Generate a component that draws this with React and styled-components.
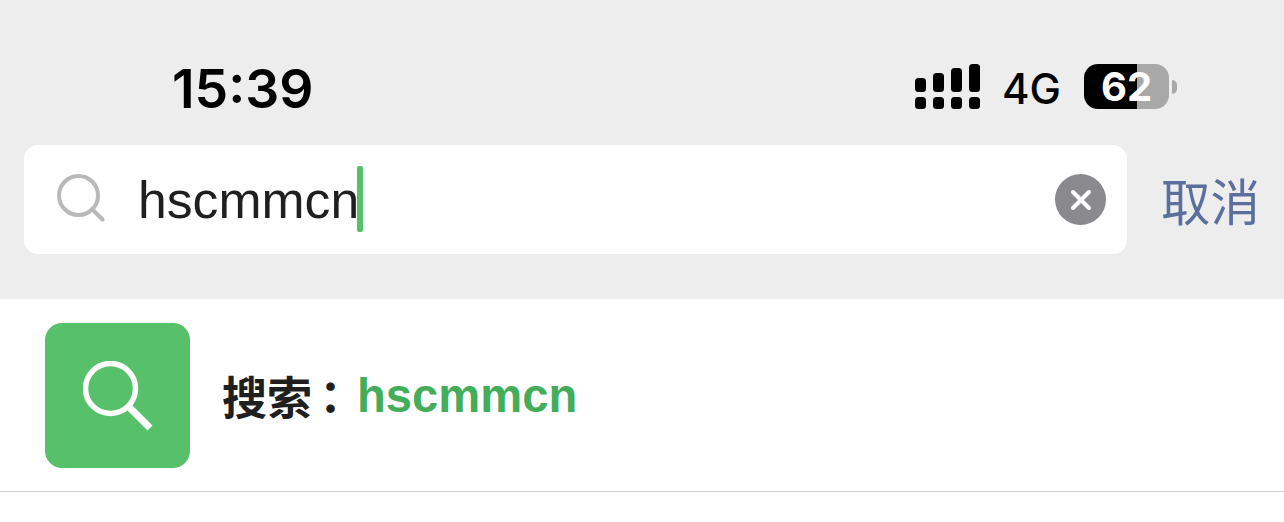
import React from 'react'
import styled, { createGlobalStyle } from 'styled-components'

const GlobalStyle = createGlobalStyle`
  html, body { margin: 0; padding: 0; background: #fff; }
  body { font-family: "Liberation Sans", "Noto Sans CJK SC", sans-serif; }
`

const Page = styled.div`
  width: 1284px;
  height: 522px;
  overflow: hidden;
  background: #fff;
`
const Header = styled.header`
  height: 299px;
  box-sizing: border-box;
  background: #ededed;
  padding: 64px 24px 0;
`
const StatusBar = styled.div`
  height: 45px;
  display: flex;
  align-items: center;
  justify-content: space-between;
  padding: 0 83px 0 148px;
`
const Time = styled.div`
  padding-top: 3px;
  font-family: Inter, "Liberation Sans", sans-serif;
  font-weight: 600;
  font-size: 53.5px;
  line-height: 45px;
  color: #000;
`
const StatusIcons = styled.div`
  display: flex;
  align-items: center;
`
const Network = styled.span`
  margin: 4px 23px 0 22px;
  font-family: Inter, "Liberation Sans", sans-serif;
  font-weight: 500;
  font-size: 42px;
  line-height: 45px;
  color: #000;
`
const Battery = styled.div`
  width: 85px;
  height: 45px;
  border-radius: 14px;
  background: linear-gradient(90deg, #000 0 53px, #a8a8a8 53px);
  color: #fff;
  font-family: Inter, "Liberation Sans", sans-serif;
  font-weight: 700;
  font-size: 40px;
  line-height: 45px;
  text-align: center;
`
const BatteryTip = styled.div`
  width: 5px;
  height: 14px;
  margin-left: 3px;
  border-radius: 0 7px 7px 0;
  background: #a8a8a8;
`
const SearchRow = styled.div`
  display: flex;
  align-items: center;
  margin-top: 36px;
`
const SearchBox = styled.div`
  flex: none;
  width: 1103px;
  height: 109px;
  box-sizing: border-box;
  display: flex;
  align-items: center;
  padding: 0 21px 0 33px;
  border-radius: 14px;
  background: #fff;
`
const FieldIcon = styled.svg`
  margin-top: -3px;
`
const Query = styled.div`
  flex: 1;
  display: flex;
  align-items: center;
  margin-left: 33px;
  font-size: 51.7px;
  line-height: 66px;
  color: #1f1f1f;
`
const Caret = styled.span`
  width: 6px;
  height: 66px;
  margin-top: -2px;
  margin-left: -2px;
  border-radius: 2px;
  background: #57c06a;
`
const ClearButton = styled.div`
  width: 51px;
  height: 51px;
  display: flex;
  align-items: center;
  justify-content: center;
  border-radius: 50%;
  background: #8a8a8e;
`
const Cancel = styled.div`
  margin-left: 34px;
  font-family: "Noto Sans CJK SC", sans-serif;
  font-size: 49.5px;
  line-height: 60px;
  color: #5b6f9d;
  white-space: nowrap;
`
const ResultRow = styled.div`
  height: 193px;
  box-sizing: border-box;
  display: flex;
  align-items: flex-start;
  padding: 24px 0 0 45px;
  border-bottom: 1px solid #cfcfcf;
`
const ResultIcon = styled.div`
  width: 145px;
  height: 145px;
  display: flex;
  align-items: center;
  justify-content: center;
  border-radius: 17px;
  background: #57c06a;
`
const ResultText = styled.div`
  height: 145px;
  display: flex;
  align-items: center;
  margin-left: 32px;
  font-weight: 700;
  line-height: 60px;
`
const ResultLabel = styled.span`
  font-family: "Noto Sans CJK SC", sans-serif;
  font-size: 45px;
  color: #1f1f1f;
`
// the colon sits in the middle of its square in the reference, as the TC glyph does
const ResultColon = styled.span`
  margin: 0 4px 0 -4px;
  font-family: "Noto Sans CJK TC", sans-serif;
  font-size: 45px;
  color: #1f1f1f;
`
const ResultQuery = styled.span`
  font-size: 47.2px;
  color: #43ad5a;
`

const Signal = () => (
  <svg width="65" height="45" viewBox="0 0 65 45" fill="#000">
    <rect x="0" y="14" width="11" height="14" rx="3.5" />
    <rect x="18" y="9" width="11" height="19" rx="3.5" />
    <rect x="36" y="4" width="11" height="24" rx="3.5" />
    <rect x="54" y="0" width="11" height="28" rx="3.5" />
    <rect x="0" y="33" width="11" height="12" rx="3.5" />
    <rect x="18" y="33" width="11" height="12" rx="3.5" />
    <rect x="36" y="33" width="11" height="12" rx="3.5" />
    <rect x="54" y="33" width="11" height="12" rx="3.5" />
  </svg>
)

export default function App() {
  return (
    <Page>
      <GlobalStyle />
      <Header>
        <StatusBar>
          <Time>15:39</Time>
          <StatusIcons>
            <Signal />
            <Network>4G</Network>
            <Battery>62</Battery>
            <BatteryTip />
          </StatusIcons>
        </StatusBar>
        <SearchRow>
          <SearchBox>
            <FieldIcon width="48" height="48" viewBox="0 0 48 48" fill="none" stroke="#b9b9b9" strokeWidth="4" strokeLinecap="round">
              <circle cx="21.5" cy="21.5" r="19.5" />
              <path d="M35 35 L45.5 45.5" />
            </FieldIcon>
            <Query>
              hscmmcn
              <Caret />
            </Query>
            <ClearButton>
              <svg width="24" height="24" viewBox="0 0 24 24" stroke="#fff" strokeWidth="4" strokeLinecap="round">
                <path d="M4 4 L20 20 M20 4 L4 20" />
              </svg>
            </ClearButton>
          </SearchBox>
          <Cancel>取消</Cancel>
        </SearchRow>
      </Header>
      <ResultRow>
        <ResultIcon>
          <svg width="70" height="70" viewBox="0 0 70 70" fill="none" stroke="#fff">
            <circle cx="27.5" cy="27.5" r="25" strokeWidth="5.5" />
            <path d="M45 45 L67 67" strokeWidth="7" />
          </svg>
        </ResultIcon>
        <ResultText>
          <ResultLabel>搜索</ResultLabel>
          <ResultColon>：</ResultColon>
          <ResultQuery>hscmmcn</ResultQuery>
        </ResultText>
      </ResultRow>
    </Page>
  )
}
